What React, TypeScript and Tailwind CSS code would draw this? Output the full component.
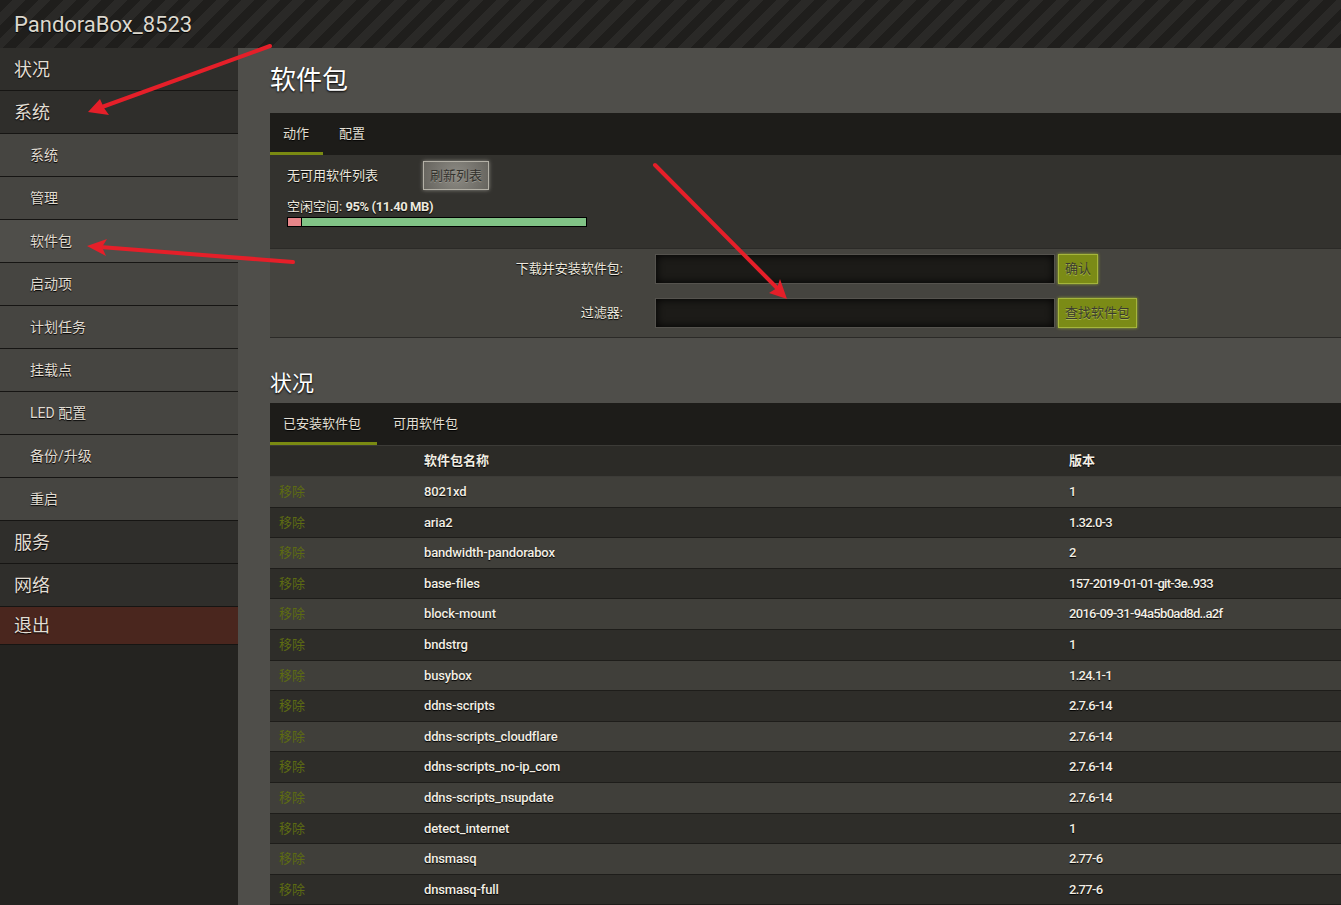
import React from "react";

const FONT = "[font-family:Roboto,'Noto_Sans_CJK_SC',sans-serif]";

const sideItems: { label: string; level: 0 | 1; active?: boolean; logout?: boolean }[] = [
  { label: "状况", level: 0 },
  { label: "系统", level: 0 },
  { label: "系统", level: 1 },
  { label: "管理", level: 1 },
  { label: "软件包", level: 1, active: true },
  { label: "启动项", level: 1 },
  { label: "计划任务", level: 1 },
  { label: "挂载点", level: 1 },
  { label: "LED 配置", level: 1 },
  { label: "备份/升级", level: 1 },
  { label: "重启", level: 1 },
  { label: "服务", level: 0 },
  { label: "网络", level: 0 },
  { label: "退出", level: 0, logout: true },
];

const packages: [string, string][] = [
  ["8021xd", "1"],
  ["aria2", "1.32.0-3"],
  ["bandwidth-pandorabox", "2"],
  ["base-files", "157-2019-01-01-git-3e..933"],
  ["block-mount", "2016-09-31-94a5b0ad8d..a2f"],
  ["bndstrg", "1"],
  ["busybox", "1.24.1-1"],
  ["ddns-scripts", "2.7.6-14"],
  ["ddns-scripts_cloudflare", "2.7.6-14"],
  ["ddns-scripts_no-ip_com", "2.7.6-14"],
  ["ddns-scripts_nsupdate", "2.7.6-14"],
  ["detect_internet", "1"],
  ["dnsmasq", "2.77-6"],
  ["dnsmasq-full", "2.77-6"],
];

function Sidebar() {
  return (
    <nav className="w-[238px] shrink-0 bg-[#242320] flex flex-col">
      {sideItems.map((it, i) => {
        const bg = it.logout
          ? "bg-[#4a261e]"
          : it.active
          ? "bg-[#4f4e4a]"
          : it.level === 1
          ? "bg-[#464541]"
          : "bg-[#2f2e2b]";
        return (
          <div
            key={i}
            className={`${bg} ${it.logout ? "h-[38px]" : "h-[43px]"} border-b border-[#161513] flex items-center ${
              it.level === 0 ? "pl-[14px] text-[18px] text-[#e2ded4]" : "pl-[30px] text-[14px] text-[#e0dcd2]"
            } [text-shadow:0_1px_1px_#000]`}
          >
            {it.label}
          </div>
        );
      })}
    </nav>
  );
}

function Tabs({ items, activeWidth }: { items: { label: string; w: string }[]; activeWidth: string }) {
  return (
    <div className="relative h-[42px] bg-[#1d1c19] flex items-center pl-[13px] text-[13px] text-[#e4e0d6] [text-shadow:0_1px_1px_#000]">
      {items.map((t, i) => (
        <span key={i} className={t.w}>
          {t.label}
        </span>
      ))}
      <div className={`absolute left-0 bottom-0 h-[3px] bg-[#7a8a12] ${activeWidth}`} />
    </div>
  );
}

function Arrows() {
  return (
    <svg className="absolute inset-0 pointer-events-none" width="1341" height="905">
      <g stroke="#e51f29" strokeWidth="4" strokeLinecap="round" fill="#e51f29">
        <line x1="270" y1="46" x2="102" y2="107" />
        <polygon points="88,112 100,99 104,108 109,115" stroke="none" />
        <line x1="293" y1="262" x2="100" y2="247" />
        <polygon points="87,246 107,239 102,247 106,256" stroke="none" />
        <line x1="655" y1="165" x2="779" y2="290" />
        <polygon points="787,299 769,293 777,288 780,279" stroke="none" />
      </g>
    </svg>
  );
}

export default function App() {
  return (
    <div className={`relative w-[1341px] h-[905px] overflow-hidden ${FONT} bg-[#4f4e4a]`}>
      <header className="h-[48px] flex items-center pl-[14px] bg-[repeating-linear-gradient(135deg,#1f1e1c_0px,#1f1e1c_9px,#2a2927_9px,#2a2927_18px)]">
        <span className="text-[22px] text-[#dcd8ce] [text-shadow:0_1px_1px_#000]">PandoraBox_8523</span>
      </header>
      <div className="flex h-[857px]">
        <Sidebar />
        <main className="flex-1 pl-[32px] pt-[14px]">
          <h1 className="text-[26px] leading-[36px] text-white [text-shadow:0_1px_2px_#000] mb-[15px]">软件包</h1>

          <Tabs
            items={[
              { label: "动作", w: "w-[56px]" },
              { label: "配置", w: "w-[56px]" },
            ]}
            activeWidth="w-[53px]"
          />
          <div className="bg-[#33322e] h-[93px] pl-[17px] pt-[6px] text-[13px] text-[#ece8de] [text-shadow:0_1px_1px_#000]">
            <div className="flex items-center h-[29px]">
              <span className="w-[136px]">无可用软件列表</span>
              <button className="h-[29px] px-[6px] bg-[radial-gradient(circle,#8d8b84_0%,#66645e_100%)] border border-[#b3b0a6] text-[#33322e] [text-shadow:0_1px_0_#9a988f] shadow-[0_0_4px_#8d8b84] text-[13px]">
                刷新列表
              </button>
            </div>
            <div className="mt-[8px] leading-[17px]">
              空闲空间: <b className="font-bold tracking-[-0.4px]">95% (11.40 MB)</b>
            </div>
            <div className="mt-[2px] w-[300px] h-[10px] border border-black flex">
              <div className="w-[14px] bg-[#e8868a] border-r border-black" />
              <div className="flex-1 bg-[#81c386]" />
            </div>
          </div>
          <div className="bg-[#45443f] border-t border-[#2b2a27] border-b border-b-[#2b2a27] h-[90px] pt-[5px] flex flex-col gap-[14px] text-[13px] text-[#ece8de]">
            {[
              ["下载并安装软件包:", "确认"],
              ["过滤器:", "查找软件包"],
            ].map(([label, btn], i) => (
              <div key={i} className="flex items-center h-[30px]">
                <span className="w-[354px] text-right pr-[1px] [text-shadow:0_1px_1px_#000]">{label}</span>
                <div className="ml-[31px] w-[400px] h-[30px] bg-[#1c1b18] border border-[#55534e] shadow-[inset_0_0_8px_#000]" />
                <button className="ml-[3px] h-[30px] px-[6px] bg-[#7b8b16] border border-[#a5b53c] shadow-[0_0_3px_#9aaa30] text-[13px] text-[#3b3a30] [text-shadow:0_1px_0_#a8b84a]">
                  {btn}
                </button>
              </div>
            ))}
          </div>

          <h2 className="mt-[31px] text-[22px] leading-[30px] text-white [text-shadow:0_1px_2px_#000] mb-[4px]">状况</h2>
          <Tabs
            items={[
              { label: "已安装软件包", w: "w-[110px]" },
              { label: "可用软件包", w: "w-[90px]" },
            ]}
            activeWidth="w-[107px]"
          />
          <div className="text-[13px] text-[#f2eee4] [text-shadow:0_1px_1px_#000]">
            <div className="flex items-center h-[32px] bg-[#2c2b27] border-t border-[#3c3b37] border-b border-[#1c1b18] font-bold">
              <span className="w-[154px]" />
              <span className="w-[645px]">软件包名称</span>
              <span>版本</span>
            </div>
            {packages.map(([name, ver], i) => (
              <div
                key={name}
                className={`flex items-center h-[30.6px] border-b border-[#1e1d1a] font-medium ${
                  i % 2 === 0 ? "bg-[#403f3a]" : "bg-[#2e2d29]"
                }`}
              >
                <span className="w-[154px] pl-[9px] text-[#5d6b12] font-normal [text-shadow:none]">移除</span>
                <span className="w-[645px] tracking-[-0.15px]">{name}</span>
                <span className="tracking-[-0.7px]">{ver}</span>
              </div>
            ))}
          </div>
        </main>
      </div>
      <Arrows />
    </div>
  );
}
